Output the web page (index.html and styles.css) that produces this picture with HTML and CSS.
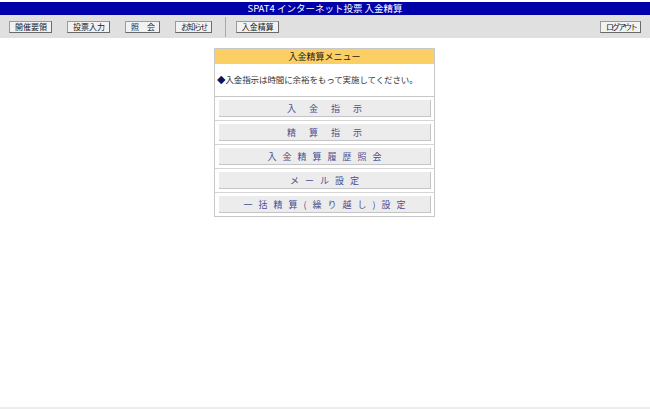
FILE: index.html
```html
<!DOCTYPE html>
<html lang="ja">

<head>
    <meta charset="UTF-8">
    <title>SPAT4 インターネット投票 入金精算</title>
    <link rel="stylesheet" href="styles.css">
</head>

<body>
    <div class="titlebar">SPAT4 インターネット投票 入金精算</div>

    <div class="toolbar">
        <button class="tb-btn">開催要領</button>
        <button class="tb-btn">投票入力</button>
        <button class="tb-btn">照　会</button>
        <button class="tb-btn kana">お知らせ</button>
        <span class="tb-sep"></span>
        <button class="tb-btn">入金精算</button>
        <button class="tb-btn kana logout">ログアウト</button>
    </div>

    <div class="menu">
        <div class="menu-head">入金精算メニュー</div>
        <p class="menu-note"><span class="mark">◆</span>入金指示は時間に余裕をもって実施してください。</p>
        <div class="menu-row"><button class="menu-btn wide">入金指示</button></div>
        <div class="menu-row"><button class="menu-btn wide">精算指示</button></div>
        <div class="menu-row"><button class="menu-btn">入金精算履歴照会</button></div>
        <div class="menu-row"><button class="menu-btn">メール設定</button></div>
        <div class="menu-row"><button class="menu-btn">一括精算(繰り越し)設定</button></div>
    </div>

    <div class="statusbar"></div>
</body>

</html>
```

FILE: styles.css
```css
body {
    font-family: "Noto Sans CJK JP", "DejaVu Sans", sans-serif;
    margin: 0;
    padding: 0;
    height: 409px;
    display: flex;
    flex-direction: column;
    background-color: #fff;
}

.titlebar {
    margin-top: 2px;
    height: 13px;
    line-height: 13px;
    background-color: #0000a8;
    color: #fff;
    font-size: 9.5px;
    text-align: center;
}

.toolbar {
    height: 23px;
    display: flex;
    align-items: center;
    padding: 0 9px;
    gap: 15px;
    background-color: #e0e0e0;
}

.tb-btn {
    height: 12px;
    padding: 0 4px 0 5px;
    font-family: inherit;
    font-size: 8px;
    line-height: 10px;
    white-space: nowrap;
    color: #1a1a1a;
    background-color: #f2f2f2;
    border: 1px solid #9a9a9a;
    border-right-color: #6a6a6a;
    border-bottom-color: #6a6a6a;
}

.tb-btn.kana {
    letter-spacing: -1.5px;
}

.tb-btn.logout {
    margin-left: auto;
    letter-spacing: -2px;
}

.tb-sep {
    width: 1px;
    height: 20px;
    margin: 0 -5px 0 -2px;
    background-color: #a8a8a8;
}

.menu {
    width: 219px;
    margin: 10px 0 0 214px;
    border: 1px solid #c8c8c8;
}

.menu-head {
    height: 15px;
    line-height: 15px;
    background-color: #fbcf63;
    color: #222;
    font-size: 9px;
    text-align: center;
}

.menu-note {
    margin: 0;
    height: 32px;
    line-height: 30px;
    padding-left: 2px;
    font-size: 8.5px;
    letter-spacing: -0.1px;
    white-space: nowrap;
    color: #333;
    border-bottom: 1px solid #c8c8c8;
}

.mark {
    color: #12125a;
}

.menu-row {
    padding: 3px 3px 3px 4px;
    border-bottom: 1px solid #d4d4d4;
}

.menu-row:last-child {
    border-bottom: none;
}

.menu-btn {
    display: block;
    width: 100%;
    height: 17px;
    padding: 0;
    font-family: inherit;
    font-size: 9px;
    white-space: nowrap;
    letter-spacing: 6px;
    text-indent: 6px;
    color: #4a4e90;
    background-color: #ececec;
    border: none;
    border-right: 1px solid #c4c4c4;
    border-bottom: 1px solid #c4c4c4;
}

.menu-btn.wide {
    letter-spacing: 13px;
    text-indent: 13px;
}

.statusbar {
    margin-top: auto;
    height: 2px;
    background-color: #ececec;
}
```
